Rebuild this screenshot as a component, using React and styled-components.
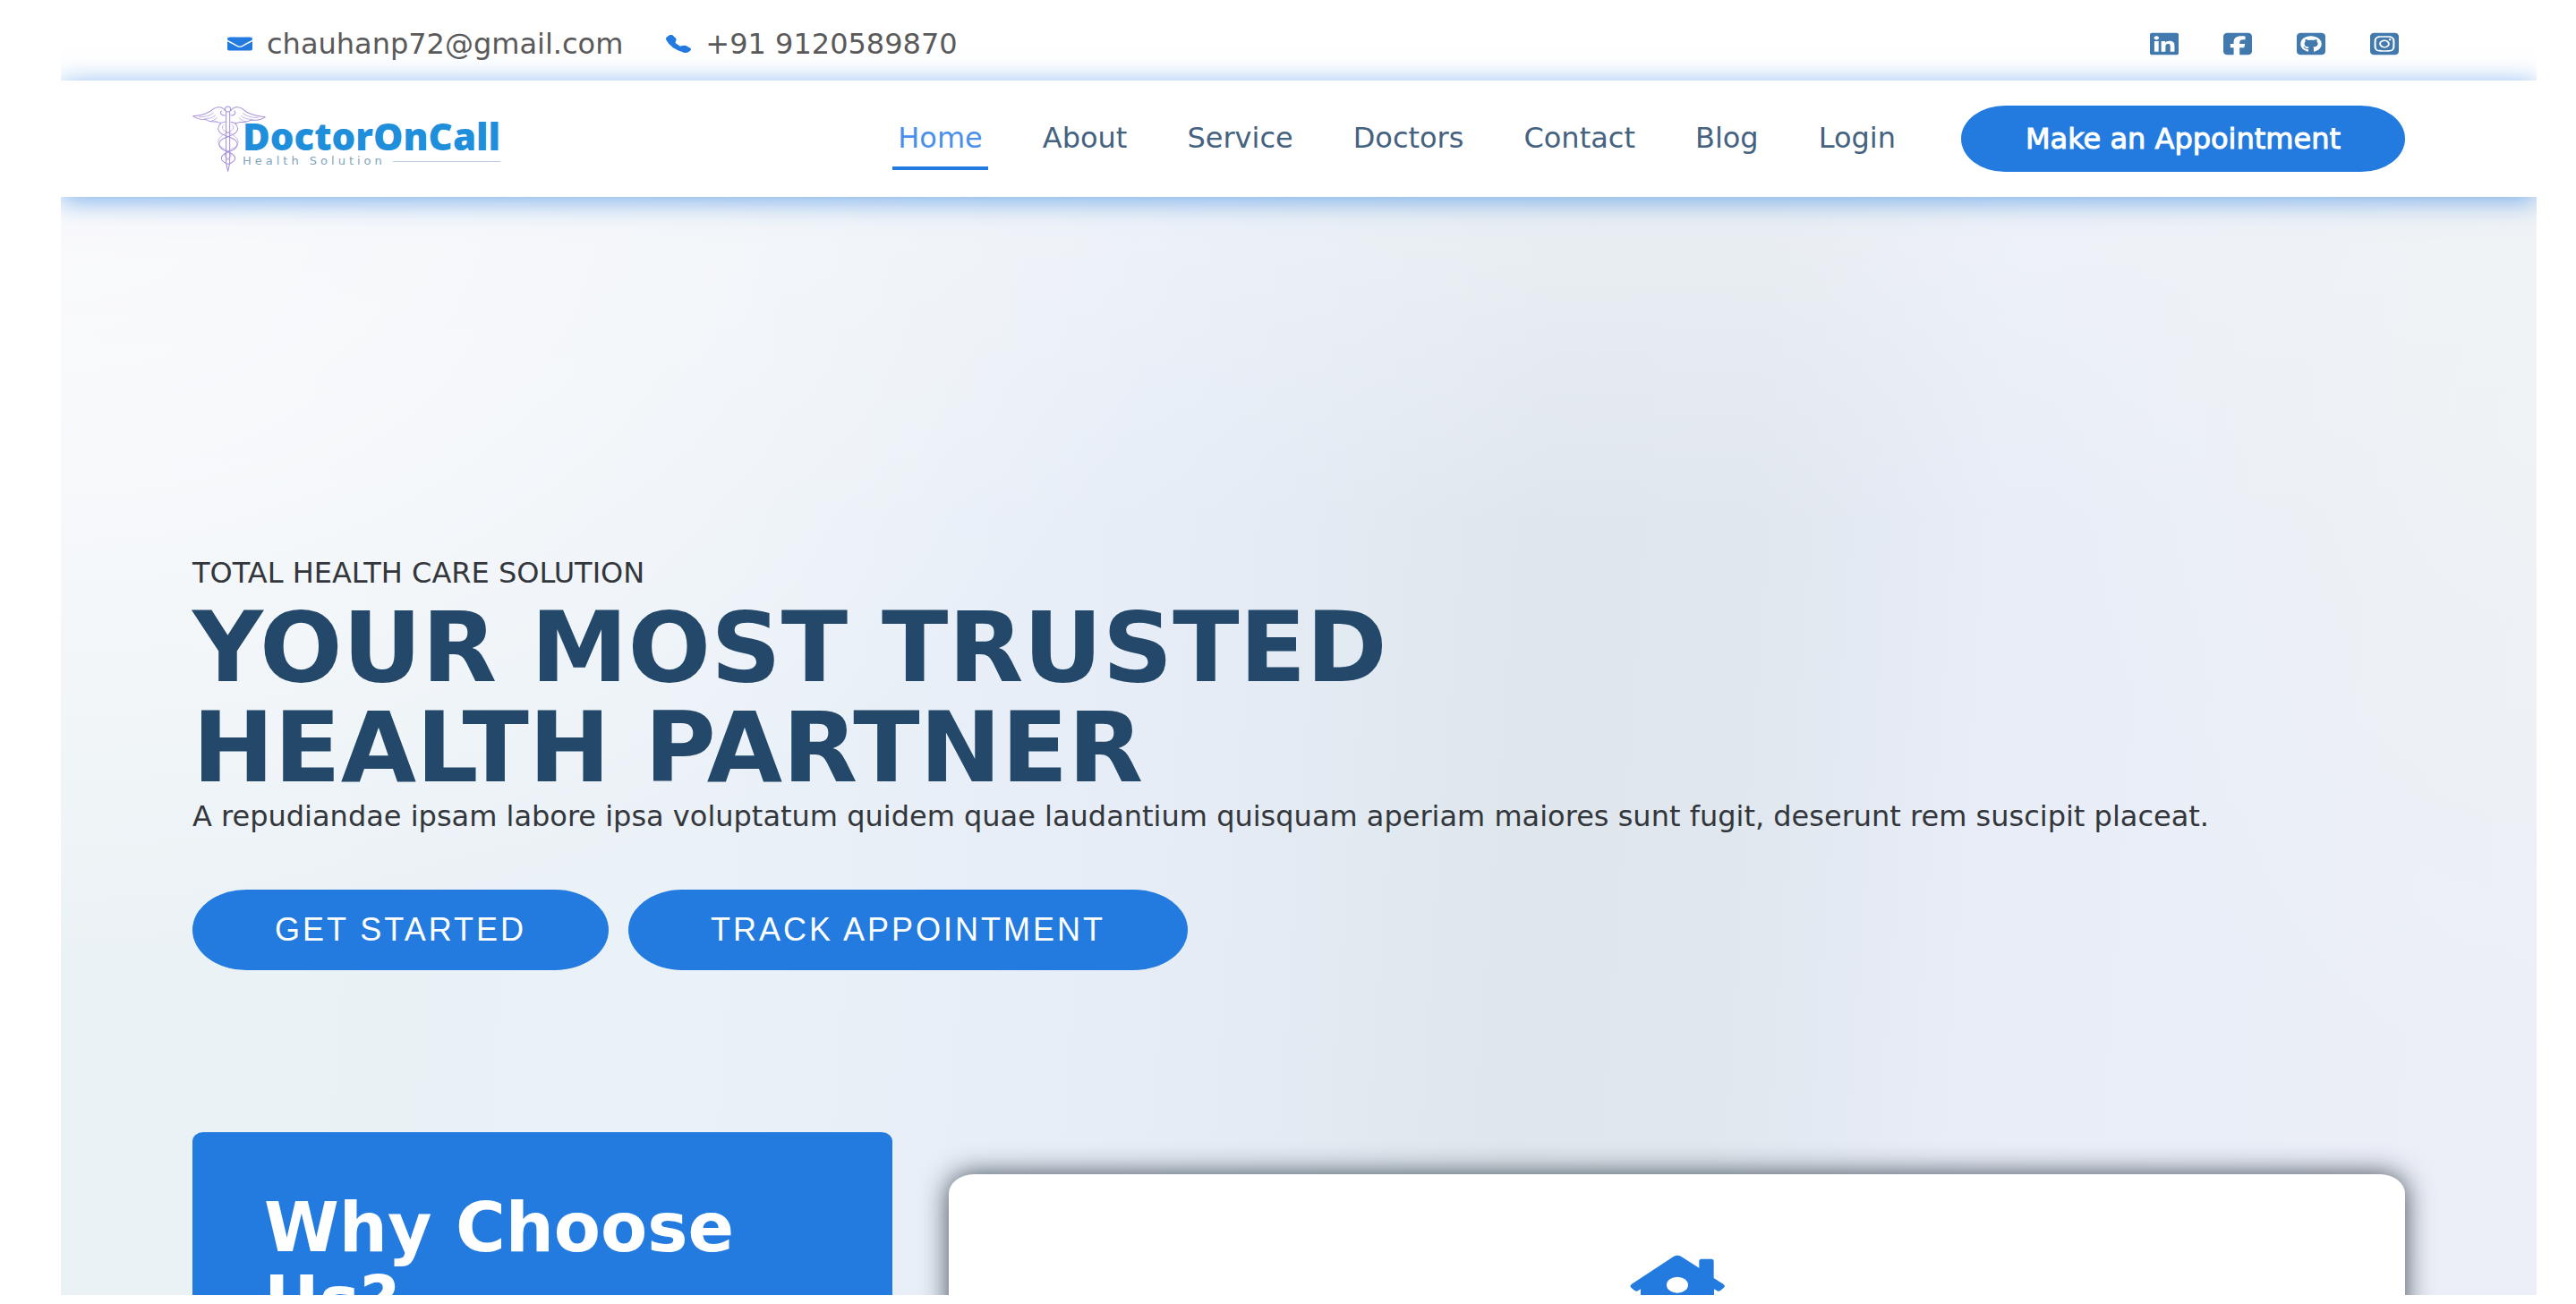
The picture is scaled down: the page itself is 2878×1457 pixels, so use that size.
import React from "react";
import styled, { createGlobalStyle } from "styled-components";
import { FaEnvelope } from "react-icons/fa";
import { BsTelephoneFill } from "react-icons/bs";
import { FaLinkedin, FaSquareFacebook, FaSquareGithub, FaSquareInstagram } from "react-icons/fa6";

const sans = `"DejaVu Sans", Verdana, sans-serif`;
const blue = "#237be0";

const GlobalStyle = createGlobalStyle`
  * { box-sizing: border-box; }
  html, body, #root { height: 100%; }
  body { margin: 0; background: #fff; font-family: ${sans}; font-size: 32px; line-height: 40px; overflow: hidden; }
  h1, h2, p, ul { margin: 0; padding: 0; }
  a { text-decoration: none; color: inherit; }
`;

const Page = styled.div`
  height: 100vh;
  padding: 0 44px 10px 68px;
`;

const Screen = styled.div`
  height: 100%;
  display: flex;
  flex-direction: column;
  overflow: hidden;
`;

const TopBar = styled.div`
  flex: none;
  height: 90px;
  padding: 8px 154px 0 186px;
  display: flex;
  align-items: center;
  justify-content: space-between;
`;

const ContactList = styled.div`
  display: flex;
  gap: 48px;
`;

const ContactLink = styled.a`
  display: flex;
  align-items: center;
  gap: 16px;
  color: #5a5a5a;
  svg { color: ${blue}; width: 28px; height: 20px; }
`;

const SocialList = styled.div`
  display: flex;
  gap: 50px;
`;

const SocialLink = styled.a`
  display: flex;
  color: #437aad;
  svg { width: 32px; height: 28px; }
`;

const Header = styled.header`
  flex: none;
  position: relative;
  z-index: 1;
  height: 130px;
  padding: 0 147px;
  display: flex;
  align-items: center;
  justify-content: space-between;
  background: #fff;
  box-shadow: 0 4px 28px rgba(35, 123, 224, 0.6);
`;

const Logo = styled.a`
  display: flex;
  align-items: flex-end;
  svg { width: 82px; height: 74px; }
`;

const LogoText = styled.span`
  display: flex;
  flex-direction: column;
  margin-left: -26px;
  padding-bottom: 4px;
`;

const LogoName = styled.span`
  color: #1f8fdb;
  font: 800 42px/40px "Open Sans", "Noto Sans", sans-serif;
`;

const LogoTag = styled.span`
  display: flex;
  align-items: center;
  gap: 8px;
  color: #7fa5bb;
  font: 13px/16px ${sans};
  letter-spacing: 4px;
  &::after { content: ""; flex: 1; height: 1px; background: #b9cbe6; }
`;

const Menu = styled.nav`
  display: flex;
  align-items: center;
  gap: 55px;
`;

const MenuLink = styled.a`
  padding: 14px 6px 12px;
  border-bottom: 4px solid ${(p) => (p.$active ? blue : "transparent")};
  color: ${(p) => (p.$active ? "#4a90ea" : "#45627f")};
`;

const AppointmentButton = styled.button`
  margin-left: 12px;
  width: 496px;
  height: 74px;
  border: 0;
  border-radius: 49px / 37px;
  background: ${blue};
  color: #fff;
  font: 32px/40px ${sans};
  -webkit-text-stroke: 1px #fff;
`;

const Hero = styled.main`
  flex: 1;
  min-height: 0;
  display: flex;
  flex-direction: column;
  justify-content: flex-end;
  padding: 0 147px;
  background:
    radial-gradient(ellipse 20% 60% at 100% 20%, rgba(239, 243, 245, 0.9) 0%, rgba(239, 243, 245, 0) 100%),
    linear-gradient(180deg, rgba(244, 246, 249, 0.5) 0%, rgba(244, 246, 249, 0) 30%),
    radial-gradient(ellipse 46% 70% at 0% 0%, #fefdff 0%, rgba(254, 253, 255, 0) 100%),
    linear-gradient(94deg, #ebf2f5 0%, #eaf1f7 26%, #e6edf7 44%, #dfe7ed 59%, #e0e7ee 67%, #e8edf7 77%, #eceff7 100%);
`;

const Eyebrow = styled.p`
  color: #33373c;
`;

const Title = styled.h1`
  margin-top: 8px;
  color: #234869;
  font-size: 109px;
  line-height: 112px;
  font-weight: 700;
`;

const Lead = styled.p`
  color: #33373c;
  white-space: nowrap;
`;

const Actions = styled.div`
  display: flex;
  gap: 22px;
  margin-top: 62px;
`;

const ActionButton = styled.button`
  height: 90px;
  padding: 0 92px;
  border: 0;
  border-radius: 60px / 45px;
  background: ${blue};
  color: #fff;
  font: 36px/40px "Liberation Sans", Arial, sans-serif;
  letter-spacing: 3px;
  white-space: nowrap;
`;

const Panels = styled.section`
  flex: none;
  height: 182px;
  margin-top: 181px;
  display: grid;
  grid-template-columns: 782fr 1627fr;
  gap: 63px;
`;

const WhyCard = styled.article`
  padding: 66px 80px 0;
  border-radius: 12px / 10px;
  height: 500px;
  background: ${blue};
`;

const WhyTitle = styled.h2`
  color: #fff;
  font-size: 76px;
  line-height: 82px;
`;

const FeatureCard = styled.article`
  margin-top: 47px;
  height: 500px;
  padding-top: 90px;
  display: flex;
  justify-content: center;
  border-radius: 28px / 22px;
  background: #fff;
  box-shadow: 0 0 30px rgba(20, 32, 44, 0.8);
  svg { width: 106px; height: 76px; color: ${blue}; }
`;

const Caduceus = () => (
  <svg viewBox="36 28 244 220" fill="none" stroke="#a68fd9" strokeWidth="3" strokeLinejoin="round" strokeLinecap="round">
    <path d="M148 50v170l6 26 6-26V50" />
    <circle cx="154" cy="40" r="9" />
    <path d="M144 44c-8-14-30-14-40-4-14 14-38 20-66 23 12 8 28 12 44 12 10 6 22 8 34 6 8 6 20 4 30 0" />
    <path d="M164 44c8-14 30-14 40-4 14 14 40 22 74 26-12 8-30 12-48 10-10 6-24 8-36 6-8 6-20 4-30 0" />
    <path d="M58 66c20 0 36-4 48-14M76 72c16 0 28-4 36-12M94 80c10-1 18-5 24-12M254 68c-20 0-38-4-50-14M236 74c-16 0-30-4-38-12M216 81c-10-1-18-5-24-12" strokeWidth="2" />
    <path d="M132 46c-6 8 2 16 12 14M176 46c6 8-2 16-12 14" />
    <path d="M130 88c-16 14-8 32 16 40s44 16 38 34-32 16-46 30 0 24 16 30" strokeWidth="3" />
    <path d="M140 92c-12 10 0 20 16 26 22 8 40 26 28 42-10 14-40 18-40 32 0 8 8 12 14 16" strokeWidth="2" />
    <path d="M178 88c16 14 8 32-16 40s-42 16-36 34 32 16 46 30 0 24-16 30" strokeWidth="3" />
    <path d="M168 92c12 10 0 20-16 26-22 8-38 26-26 42 10 14 38 18 38 32 0 8-8 12-14 16" strokeWidth="2" />
  </svg>
);

const HomeIcon = () => (
  <svg viewBox="0 0 318 228" fill="currentColor">
    <path
      fillRule="evenodd"
      d="M146 6q14-8 26 0l60 38V22q0-8 8-8h33q8 0 8 8v56l32 20q8 6 2 12l-12 10q-6 4-12 0l-9-5v113H36V115l-8 5q-6 4-12 0L4 110q-6-6 2-12zM159 74a36 27 0 1 0 0 54a36 27 0 1 0 0-54z"
    />
  </svg>
);

const menu = ["Home", "About", "Service", "Doctors", "Contact", "Blog", "Login"];
const social = [["LinkedIn", FaLinkedin], ["Facebook", FaSquareFacebook], ["GitHub", FaSquareGithub], ["Instagram", FaSquareInstagram]];

export default function App() {
  return (
    <Page>
      <GlobalStyle />
      <Screen>
        <TopBar>
          <ContactList>
            <ContactLink href="mailto:chauhanp72@gmail.com"><FaEnvelope preserveAspectRatio="none" />chauhanp72@gmail.com</ContactLink>
            <ContactLink href="tel:+919120589870"><BsTelephoneFill preserveAspectRatio="none" />+91 9120589870</ContactLink>
          </ContactList>
          <SocialList>
            {social.map(([name, Icon]) => (
              <SocialLink key={name} href="#" aria-label={name}><Icon preserveAspectRatio="none" /></SocialLink>
            ))}
          </SocialList>
        </TopBar>
        <Header>
          <Logo href="#">
            <Caduceus />
            <LogoText><LogoName>DoctorOnCall</LogoName><LogoTag>Health Solution</LogoTag></LogoText>
          </Logo>
          <Menu>
            {menu.map((m, i) => <MenuLink key={m} href="#" $active={i === 0}>{m}</MenuLink>)}
            <AppointmentButton type="button">Make an Appointment</AppointmentButton>
          </Menu>
        </Header>
        <Hero>
          <Eyebrow>TOTAL HEALTH CARE SOLUTION</Eyebrow>
          <Title>YOUR MOST TRUSTED<br />HEALTH PARTNER</Title>
          <Lead>A repudiandae ipsam labore ipsa voluptatum quidem quae laudantium quisquam aperiam maiores sunt fugit, deserunt rem suscipit placeat.</Lead>
          <Actions>
            <ActionButton type="button">GET STARTED</ActionButton>
            <ActionButton type="button">TRACK APPOINTMENT</ActionButton>
          </Actions>
          <Panels>
            <WhyCard><WhyTitle>Why Choose Us?</WhyTitle></WhyCard>
            <FeatureCard><HomeIcon /></FeatureCard>
          </Panels>
        </Hero>
      </Screen>
    </Page>
  );
}
